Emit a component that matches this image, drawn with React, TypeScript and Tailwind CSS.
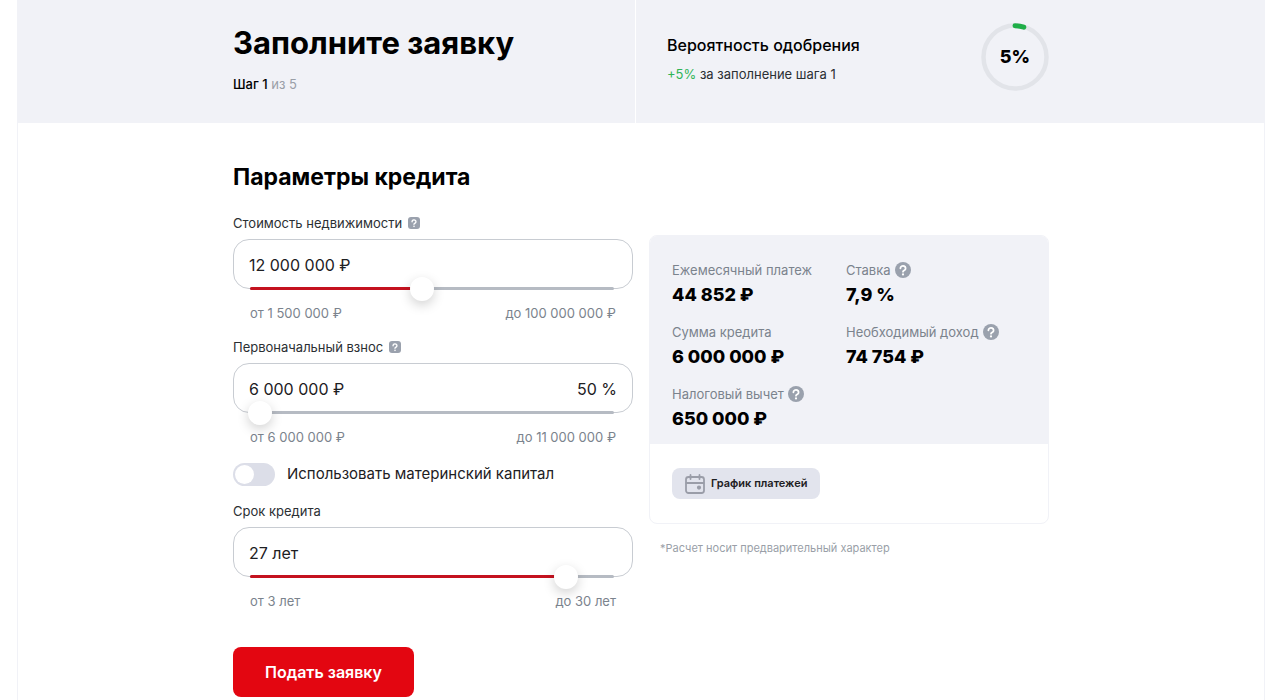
import React, { useState } from "react";

interface HelpIconProps {
  square?: boolean;
}

const HelpIcon: React.FC<HelpIconProps> = ({ square }) => (
  <svg
    viewBox="0 0 16 16"
    className={square ? "size-3 shrink-0" : "size-4 shrink-0"}
    aria-hidden="true"
  >
    <rect width="16" height="16" rx={square ? 4 : 8} fill="#9aa1ad" />
    <path
      d="M5.4 6.3a2.6 2.4 0 1 1 4.1 1.9c-.9.5-1.5.8-1.5 1.5"
      fill="none"
      stroke="#fff"
      strokeWidth="1.8"
      strokeLinecap="round"
    />
    <circle cx="8" cy="12.4" r="1.1" fill="#fff" />
  </svg>
);

const CalendarIcon: React.FC = () => (
  <svg
    viewBox="0 0 20 20"
    className="size-5 shrink-0"
    fill="none"
    stroke="#9a9da8"
    strokeWidth="1.8"
    strokeLinecap="round"
    aria-hidden="true"
  >
    <rect x="1" y="3" width="18" height="16" rx="2.5" />
    <path d="M1.5 9h17M5.5 1v4M14.5 1v4" />
    <circle cx="14" cy="13.6" r="1.2" fill="#9a9da8" />
  </svg>
);

interface SliderFieldProps {
  id: string;
  label: string;
  help?: boolean;
  initialValue: string;
  suffix?: string;
  initialPosition: number;
  from: string;
  to: string;
}

const SliderField: React.FC<SliderFieldProps> = ({
  id,
  label,
  help,
  initialValue,
  suffix,
  initialPosition,
  from,
  to,
}) => {
  const [value, setValue] = useState(initialValue);
  const [position, setPosition] = useState(initialPosition);

  return (
    <div>
      <div className="flex items-center gap-1.5">
        <label htmlFor={id} className="text-[13px] leading-5 text-[#2b2f33]">
          {label}
        </label>
        {help && <HelpIcon square />}
      </div>
      <div className="mt-1.5 flex h-[50px] items-center rounded-2xl border border-[#c8ccd2] px-[15px] pt-0.5 text-base text-[#1d2023]">
        <input
          id={id}
          type="text"
          className="w-full min-w-0 bg-transparent outline-none"
          value={value}
          onChange={(e) => setValue(e.target.value)}
        />
        {suffix && <span className="shrink-0">{suffix}</span>}
      </div>
      <div className="relative mr-[19px] ml-[17px] -mt-0.5 h-[3px] rounded-full bg-[#b6bbc3]">
        <div
          className="h-full rounded-full bg-[#c4121f]"
          style={{ width: `${position}%` }}
        />
        <input
          type="range"
          aria-label={label}
          min={0}
          max={100}
          value={position}
          onChange={(e) => setPosition(Number(e.target.value))}
          className="absolute top-1/2 -left-0.5 h-6 w-[calc(100%+4px)] -translate-y-1/2 cursor-pointer appearance-none bg-transparent outline-none [&::-webkit-slider-thumb]:size-6 [&::-webkit-slider-thumb]:appearance-none [&::-webkit-slider-thumb]:rounded-full [&::-webkit-slider-thumb]:bg-white [&::-webkit-slider-thumb]:shadow-[0_4px_12px_rgba(0,0,0,0.18)]"
        />
      </div>
      <div className="mx-[17px] mt-[13px] flex justify-between text-[13px] leading-5 text-[#7b838d]">
        <span>{from}</span>
        <span>{to}</span>
      </div>
    </div>
  );
};

interface SummaryItemProps {
  label: string;
  value: string;
  help?: boolean;
}

const SummaryItem: React.FC<SummaryItemProps> = ({ label, value, help }) => (
  <div>
    <dt className="flex items-center gap-1 text-[13px] leading-5 whitespace-nowrap text-[#7b838d]">
      {label}
      {help && <HelpIcon />}
    </dt>
    <dd className="text-lg leading-[30px] font-extrabold text-black">
      {value}
    </dd>
  </div>
);

const ApprovalRing: React.FC = () => (
  <div className="relative grid size-[68px] place-items-center">
    <svg
      viewBox="0 0 68 68"
      className="absolute inset-0"
      fill="none"
      aria-hidden="true"
    >
      <circle cx="34" cy="34" r="31.5" stroke="#e2e4e9" strokeWidth="4.5" />
      <path
        d="M34 2.8A31.5 31.5 0 0 1 42.8 4.2"
        stroke="#1fae48"
        strokeWidth="5"
        strokeLinecap="round"
      />
    </svg>
    <span className="relative text-lg font-extrabold text-black">5%</span>
  </div>
);

const Header: React.FC = () => (
  <header className="bg-[#f1f2f7]">
    <div className="mx-auto grid max-w-[816px] grid-cols-[403px_1fr]">
      <div className="border-r border-white pt-[23px] pb-[29px]">
        <h1 className="text-[31px] leading-10 font-bold text-black">
          Заполните заявку
        </h1>
        <p className="mt-[11px] text-[13px] leading-5 text-[#9a9fa8]">
          <span className="font-medium text-black">Шаг 1</span> из 5
        </p>
      </div>
      <div className="flex items-start justify-between pt-[23px] pl-[31px]">
        <div className="pt-2.5">
          <h2 className="text-base leading-6 font-medium text-black">
            Вероятность одобрения
          </h2>
          <p className="mt-[7px] text-[13px] leading-5 text-[#2b2f33]">
            <span className="text-[#2fb457]">+5%</span> за заполнение шага 1
          </p>
        </div>
        <ApprovalRing />
      </div>
    </div>
  </header>
);

const App: React.FC = () => {
  const [useCapital, setUseCapital] = useState(false);

  return (
    <div className="min-h-screen bg-white pr-5 pl-[17px] font-['Inter','Liberation_Sans',sans-serif]">
      <div className="min-h-screen border-x border-[#f1f2f7]">
        <Header />
        <main className="mx-auto grid max-w-[816px] grid-cols-2 gap-4 pt-[38px]">
          <form onSubmit={(e) => e.preventDefault()}>
            <h2 className="text-[23px] leading-8 font-bold text-black">
              Параметры кредита
            </h2>
            <div className="mt-5 flex flex-col gap-3.5">
              <SliderField
                id="price"
                label="Стоимость недвижимости"
                help
                initialValue="12 000 000 ₽"
                initialPosition={47}
                from="от 1 500 000 ₽"
                to="до 100 000 000 ₽"
              />
              <SliderField
                id="deposit"
                label="Первоначальный взнос"
                help
                initialValue="6 000 000 ₽"
                suffix="50 %"
                initialPosition={0}
                from="от 6 000 000 ₽"
                to="до 11 000 000 ₽"
              />
              <label className="flex cursor-pointer items-center gap-3 text-[15px] leading-[26px] text-[#1d2023]">
                <input
                  type="checkbox"
                  checked={useCapital}
                  onChange={(e) => setUseCapital(e.target.checked)}
                  className="h-[23px] w-[42px] shrink-0 appearance-none rounded-full bg-[#dcdee8] p-0.5 before:block before:size-[19px] before:rounded-full before:bg-white checked:bg-[#c4121f] checked:before:ml-[19px]"
                />
                Использовать материнский капитал
              </label>
              <SliderField
                id="term"
                label="Срок кредита"
                initialValue="27 лет"
                initialPosition={89}
                from="от 3 лет"
                to="до 30 лет"
              />
            </div>
            <button
              type="submit"
              className="mt-9 h-[50px] rounded-lg bg-[#e30611] px-8 text-base font-semibold text-white"
            >
              Подать заявку
            </button>
          </form>

          <aside className="pt-[74px]">
            <div className="overflow-hidden rounded-lg border border-[#f1f2f7]">
              <dl className="grid grid-cols-[174px_1fr] gap-y-3 bg-[#f1f2f7] px-[22px] pt-6 pb-2.5">
                <SummaryItem label="Ежемесячный платеж" value="44 852 ₽" />
                <SummaryItem label="Ставка" value="7,9 %" help />
                <SummaryItem label="Сумма кредита" value="6 000 000 ₽" />
                <SummaryItem label="Необходимый доход" value="74 754 ₽" help />
                <SummaryItem label="Налоговый вычет" value="650 000 ₽" help />
              </dl>
              <div className="px-[22px] py-6">
                <button
                  type="button"
                  className="flex h-[31px] items-center gap-1.5 rounded-lg bg-[#e2e4ed] px-[13px] text-[11px] font-semibold text-[#1d2023]"
                >
                  <CalendarIcon />
                  График платежей
                </button>
              </div>
            </div>
            <p className="mt-4 pl-[11px] text-[11px] leading-4 text-[#9a9fa8]">
              *Расчет носит предварительный характер
            </p>
          </aside>
        </main>
      </div>
    </div>
  );
};

export default App;
